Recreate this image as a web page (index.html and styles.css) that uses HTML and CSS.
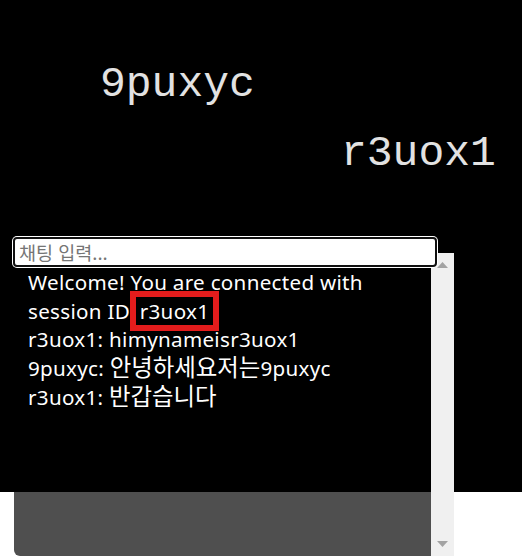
FILE: index.html
```html
<!DOCTYPE html>
<html lang="ko">
<head>
<meta charset="utf-8">
<title>Chat</title>
<link rel="stylesheet" href="styles.css">
</head>
<body>
<div class="stage">
  <div class="player player-a">9puxyc</div>
  <div class="player player-b">r3uox1</div>
</div>
<div class="chat">
  <div class="log">
    <div class="msg">Welcome! You are connected with session ID <span class="sid">r3uox1</span></div>
    <div class="msg">r3uox1: himynameisr3uox1</div>
    <div class="msg">9puxyc: <span class="ko">안녕하세요저는</span>9puxyc</div>
    <div class="msg">r3uox1: <span class="ko">반갑습니다</span></div>
  </div>
  <div class="scrollbar">
    <svg class="arrow" width="23" height="23" viewBox="0 0 23 23"><path d="M6 15 L11.5 9 L17 15 Z" fill="#a3a3a3"/></svg>
    <svg class="arrow" width="23" height="23" viewBox="0 0 23 23"><path d="M6 8 L11.5 14 L17 8 Z" fill="#a3a3a3"/></svg>
  </div>
</div>
<input class="chat-input" type="text" placeholder="채팅 입력..." autofocus>
</body>
</html>
```

FILE: styles.css
```css
html, body {
  margin: 0;
  padding: 0;
  background: #ffffff;
}

body {
  position: relative;
  width: 522px;
  height: 557px;
  overflow: hidden;
  font-family: "Noto Sans", "Noto Sans CJK KR", sans-serif;
}

.stage {
  position: relative;
  width: 522px;
  height: 492px;
  background: #000000;
}

.player {
  position: absolute;
  font-family: "Liberation Mono", monospace;
  font-size: 43px;
  line-height: 44px;
  color: #e2e2e2;
  white-space: nowrap;
}

.player-a {
  left: 100px;
  top: 63px;
}

.player-b {
  left: 341px;
  top: 132px;
}

.chat {
  position: absolute;
  left: 14px;
  top: 253px;
  width: 440px;
  height: 303px;
  display: flex;
  border-radius: 6px 0 0 6px;
  overflow: hidden;
  background: rgba(0, 0, 0, 0.69);
}

.log {
  flex: 1;
  min-width: 0;
  padding: 15px 10px 10px 14px;
  color: #ffffff;
  font-family: "Noto Sans", "Noto Sans CJK KR", sans-serif;
  font-size: 20.6px;
  letter-spacing: 0.3px;
  line-height: 28.7px;
}

.ko {
  font-family: "Noto Sans CJK KR", sans-serif;
  font-size: 23.4px;
  letter-spacing: 0;
  line-height: 1;
}

.scrollbar {
  width: 23px;
  flex: none;
  background: #f0f0f0;
  display: flex;
  flex-direction: column;
  justify-content: space-between;
}

.arrow {
  display: block;
}

.sid {
  padding: 0 4px;
  outline: 6px solid #e31c1c;
}

.chat-input {
  position: absolute;
  left: 13px;
  top: 237px;
  width: 424px;
  height: 30px;
  box-sizing: border-box;
  margin: 0;
  padding: 0 4px;
  border: 2px solid #101010;
  border-radius: 4px;
  box-shadow: 0 0 0 1px #ffffff;
  background: #ffffff;
  outline: none;
  font-family: "Noto Sans CJK KR", "Noto Sans", sans-serif;
  font-size: 18.5px;
  color: #000000;
}

.chat-input::placeholder {
  color: #757575;
}
```
